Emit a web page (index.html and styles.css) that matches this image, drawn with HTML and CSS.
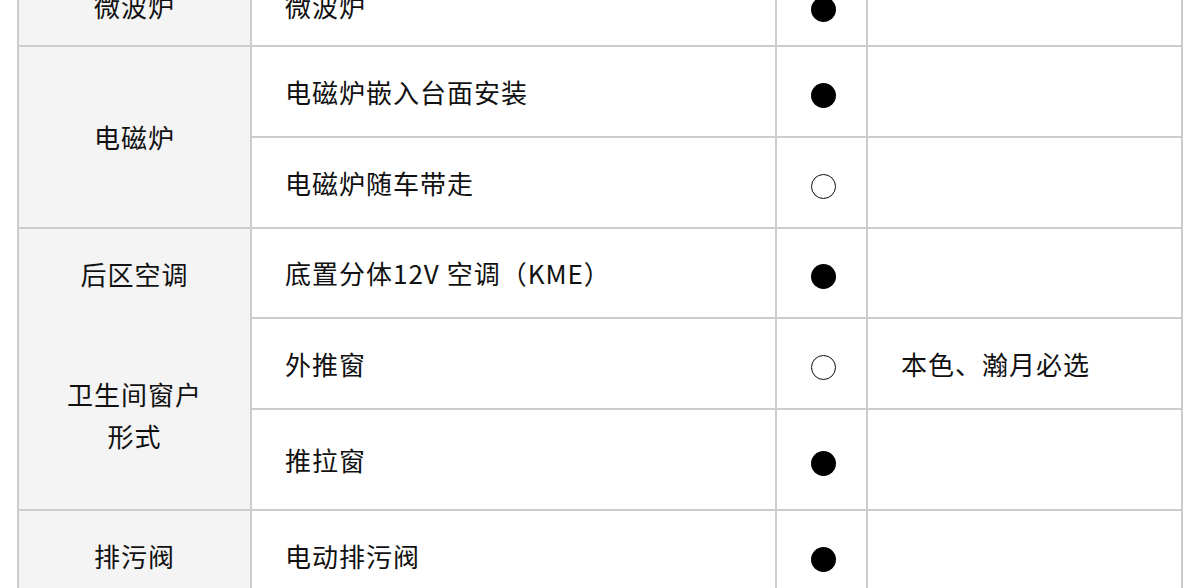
FILE: index.html
```html
<!DOCTYPE html>
<html lang="zh-CN">
<head>
<meta charset="utf-8">
<title>配置表</title>
<link rel="stylesheet" href="styles.css">
</head>
<body>
<table class="spec">
  <colgroup>
    <col class="c1"><col class="c2"><col class="c3"><col class="c4">
  </colgroup>
  <tbody>
    <tr class="row row-first">
      <td class="cat">微波炉</td>
      <td class="item">微波炉</td>
      <td class="mark"><span class="dot full"></span></td>
      <td class="note"></td>
    </tr>
    <tr class="row">
      <td class="cat" rowspan="2">电磁炉</td>
      <td class="item">电磁炉嵌入台面安装</td>
      <td class="mark"><span class="dot full"></span></td>
      <td class="note"></td>
    </tr>
    <tr class="row">
      <td class="item">电磁炉随车带走</td>
      <td class="mark"><span class="dot empty"></span></td>
      <td class="note"></td>
    </tr>
    <tr class="row row-s">
      <td class="cat open-bottom">后区空调</td>
      <td class="item">底置分体12V 空调（KME）</td>
      <td class="mark"><span class="dot full"></span></td>
      <td class="note"></td>
    </tr>
    <tr class="row">
      <td class="cat open-top two-line" rowspan="2">卫生间窗户<br>形式</td>
      <td class="item">外推窗</td>
      <td class="mark"><span class="dot empty"></span></td>
      <td class="note">本色、瀚月必选</td>
    </tr>
    <tr class="row row-l">
      <td class="item">推拉窗</td>
      <td class="mark"><span class="dot full"></span></td>
      <td class="note"></td>
    </tr>
    <tr class="row">
      <td class="cat">排污阀</td>
      <td class="item">电动排污阀</td>
      <td class="mark"><span class="dot full"></span></td>
      <td class="note"></td>
    </tr>
  </tbody>
</table>
</body>
</html>
```

FILE: styles.css
```css
html, body {
  margin: 0;
  padding: 0;
  background: #ffffff;
}

body {
  font-family: "Noto Sans CJK SC", "Noto Sans", sans-serif;
  color: #111111;
  overflow: hidden;
}

.spec {
  border-collapse: collapse;
  table-layout: fixed;
  width: 1166px;
  margin: -35px 0 0 17px;
  font-size: 26px;
  letter-spacing: 1px;
  line-height: 42px;
}

.c1 { width: 233px; }
.c2 { width: 525px; }
.c3 { width: 91px; }
.c4 { width: 315px; }

.spec td {
  border: 2px solid #cccccc;
  padding: 0;
  vertical-align: middle;
}

.row { height: 91px; }
.row-first { height: 80px; }
.row-s { height: 90px; }
.row-l { height: 101px; }

.cat {
  background: #f4f4f4;
  text-align: center;
}

.open-bottom { border-bottom-style: hidden !important; }
.open-top { border-top-style: hidden !important; }

.two-line {
  padding-top: 3px !important;
}

.item, .note {
  padding-left: 33px !important;
  text-align: left;
}

.mark {
  text-align: center;
}

.dot {
  display: inline-block;
  width: 25px;
  height: 25px;
  border-radius: 50%;
  box-sizing: border-box;
  vertical-align: middle;
  margin-top: 0;
  margin-left: 4px;
}

.dot.full {
  background: #000000;
}

.dot.empty {
  border: 1.4px solid #111111;
  background: #ffffff;
}
```
